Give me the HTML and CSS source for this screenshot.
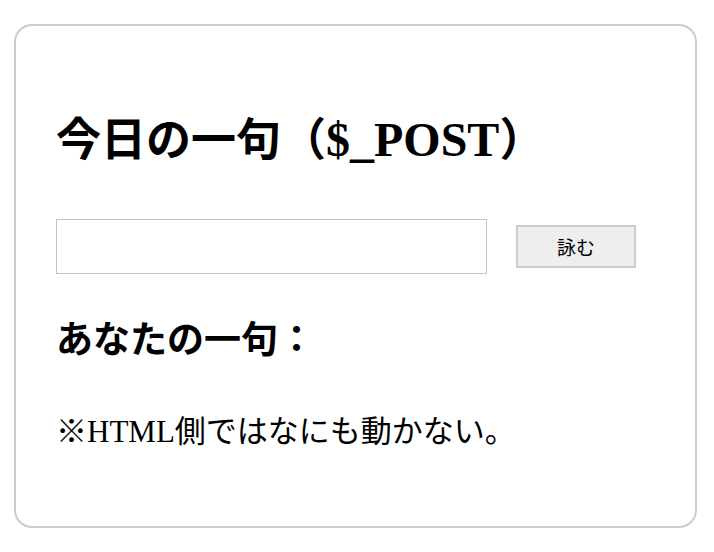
FILE: index.html
```html
<!DOCTYPE html>
<html>
<head>
  <meta charset="utf-8">
  <title>今日の一句</title>
  <link rel="stylesheet" href="styles.css">
</head>
<body>
  <div class="container">
    <h1>今日の一句（<span class="latin">$_POST</span>）</h1>

    <form class="ku-form" method="post">
      <input type="text" name="ku" class="ku-input">
      <input type="submit" value="詠む" class="ku-button">
    </form>

    <h2>あなたの一句：</h2>

    <p class="note">※HTML側ではなにも動かない。</p>
  </div>
</body>
</html>
```

FILE: styles.css
```css
body {
  font-family: 'Liberation Serif', 'Noto Sans CJK JP', serif;
  background-color: #fff;
  color: #000;
  margin: 0;
  padding: 24px 17px 24px 14px;
}
.container {
  height: 504px;
  box-sizing: border-box;
  border: 2px solid #ccc;
  border-radius: 18px;
  padding: 87px 40px 0 40px;
}
h1 {
  font-size: 45px;
  line-height: 54px;
  font-weight: bold;
  margin: 0;
}
h1 .latin {
  font-size: 48px;
}
.ku-form {
  display: flex;
  align-items: center;
  gap: 29px;
  margin-top: 51px;
}
.ku-input {
  width: 431px;
  height: 55px;
  box-sizing: border-box;
  border: 1px solid #c4c4c4;
  margin: 0;
  padding: 4px 8px;
  font-size: 18px;
}
.ku-button {
  width: 120px;
  height: 43px;
  box-sizing: border-box;
  background-color: #eee;
  border: 2px solid #ccc;
  border-radius: 0;
  margin: 0;
  font-family: 'Noto Sans CJK JP', sans-serif;
  font-size: 19px;
  color: #000;
  cursor: pointer;
}
h2 {
  font-size: 37px;
  line-height: 43px;
  font-weight: bold;
  margin: 45px 0 0;
}
.note {
  font-size: 31px;
  line-height: 36px;
  margin: 52px 0 0;
}
```
